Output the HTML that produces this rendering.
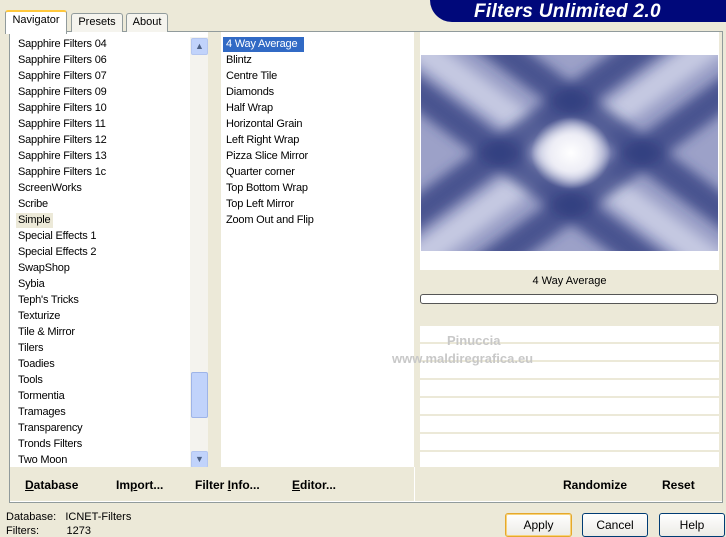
<!DOCTYPE html>
<html><head><style>
body{margin:0;width:726px;height:532px;background:#ece9d8;font-family:"Liberation Sans",sans-serif;font-size:11px;position:relative;overflow:hidden;color:#000}
.a{position:absolute}
.tab{position:absolute;top:13px;height:18px;border:1px solid #919b9c;border-bottom:none;background:#f5f4ee;text-align:center;line-height:17px;font-size:11px;border-radius:3px 3px 0 0}
.li{position:absolute;left:18px;font-size:11px;line-height:14px;white-space:nowrap;letter-spacing:-0.2px}
.mi{position:absolute;left:226px;font-size:11px;line-height:14px;white-space:nowrap;letter-spacing:-0.2px}
.btn{position:absolute;font-weight:bold;font-size:12px}
.pb{position:absolute;top:513px;height:22px;border:1px solid #003c74;border-radius:3px;background:linear-gradient(#fff,#ecebe6);text-align:center;line-height:22px;font-size:12px}
.hl{position:absolute;left:420px;width:299px;height:2px;background:#ece9d8}
</style></head><body>
<div class="a" style="left:430px;top:0;width:296px;height:22px;background:#00087a;border-bottom-left-radius:22px"></div>
<div class="a" style="left:474px;top:1px;color:#fff;font-weight:bold;font-style:italic;font-size:19px;letter-spacing:0.3px">Filters Unlimited 2.0</div>
<div class="a" style="left:9px;top:31px;width:712px;height:470px;border:1px solid #919b9c;background:#fff"></div>
<div class="tab" style="left:5px;top:10px;width:60px;height:22px;background:#fff;border-top:2px solid #ffc83c;z-index:2">Navigator</div>
<div class="tab" style="left:71px;width:50px">Presets</div>
<div class="tab" style="left:126px;width:40px">About</div>
<div class="a" style="left:190px;top:37px;width:18px;height:430px;background:#f4f3ee"></div>
<div class="a" style="left:191px;top:38px;width:15px;height:15px;background:#c1d3fb;border:1px solid #b4c6f0;border-radius:2px;color:#4d6185;font-size:9px;text-align:center;line-height:15px">&#9650;</div>
<div class="a" style="left:191px;top:372px;width:15px;height:44px;background:#c1d3fb;border:1px solid #9eb4e8;border-radius:2px"></div>
<div class="a" style="left:191px;top:451px;width:15px;height:15px;background:#c1d3fb;border:1px solid #b4c6f0;border-radius:2px;color:#4d6185;font-size:9px;text-align:center;line-height:15px">&#9660;</div>
<div class="a" style="left:208px;top:32px;width:13px;height:436px;background:#ece9d8"></div>
<div class="a" style="left:414px;top:32px;width:6px;height:436px;background:#ece9d8"></div>
<div class="a" style="left:719px;top:32px;width:3px;height:436px;background:#ece9d8"></div>
<div class="a" style="left:16px;top:213px;width:37px;height:15px;background:#ece9d8"></div>
<div class="li" style="top:37px">Sapphire Filters 04</div><div class="li" style="top:53px">Sapphire Filters 06</div><div class="li" style="top:69px">Sapphire Filters 07</div><div class="li" style="top:85px">Sapphire Filters 09</div><div class="li" style="top:101px">Sapphire Filters 10</div><div class="li" style="top:117px">Sapphire Filters 11</div><div class="li" style="top:133px">Sapphire Filters 12</div><div class="li" style="top:149px">Sapphire Filters 13</div><div class="li" style="top:165px">Sapphire Filters 1c</div><div class="li" style="top:181px">ScreenWorks</div><div class="li" style="top:197px">Scribe</div><div class="li" style="top:213px">Simple</div><div class="li" style="top:229px">Special Effects 1</div><div class="li" style="top:245px">Special Effects 2</div><div class="li" style="top:261px">SwapShop</div><div class="li" style="top:277px">Sybia</div><div class="li" style="top:293px">Teph's Tricks</div><div class="li" style="top:309px">Texturize</div><div class="li" style="top:325px">Tile &amp; Mirror</div><div class="li" style="top:341px">Tilers</div><div class="li" style="top:357px">Toadies</div><div class="li" style="top:373px">Tools</div><div class="li" style="top:389px">Tormentia</div><div class="li" style="top:405px">Tramages</div><div class="li" style="top:421px">Transparency</div><div class="li" style="top:437px">Tronds Filters</div><div class="li" style="top:453px">Two Moon</div>
<div class="a" style="left:223px;top:37px;width:81px;height:15px;background:#316ac5"></div>
<div class="mi" style="top:37px;color:#fff">4 Way Average</div><div class="mi" style="top:53px">Blintz</div><div class="mi" style="top:69px">Centre Tile</div><div class="mi" style="top:85px">Diamonds</div><div class="mi" style="top:101px">Half Wrap</div><div class="mi" style="top:117px">Horizontal Grain</div><div class="mi" style="top:133px">Left Right Wrap</div><div class="mi" style="top:149px">Pizza Slice Mirror</div><div class="mi" style="top:165px">Quarter corner</div><div class="mi" style="top:181px">Top Bottom Wrap</div><div class="mi" style="top:197px">Top Left Mirror</div><div class="mi" style="top:213px">Zoom Out and Flip</div>
<svg class="a" style="left:421px;top:55px" width="297" height="196">
<defs><filter id="b" x="-20%" y="-20%" width="140%" height="140%"><feGaussianBlur stdDeviation="6"/></filter>
<radialGradient id="c"><stop offset="0" stop-color="#fff"/><stop offset="0.5" stop-color="#eeeef6"/><stop offset="1" stop-color="#eeeef6" stop-opacity="0"/></radialGradient></defs>
<rect width="297" height="196" fill="#9ca1c8"/>
<g filter="url(#b)" stroke="#d0d3e8" stroke-width="26" stroke-opacity="0.8">
<line x1="-20" y1="-20" x2="320" y2="228"/><line x1="-20" y1="216" x2="320" y2="-32"/>
</g>
<g filter="url(#b)" stroke="#2f3a7c" stroke-width="30" stroke-opacity="0.75">
<line x1="-20" y1="26" x2="320" y2="274"/><line x1="-20" y1="-78" x2="320" y2="170"/>
<line x1="-20" y1="170" x2="320" y2="-78"/><line x1="-20" y1="274" x2="320" y2="26"/>
</g>
<ellipse cx="150" cy="98" rx="40" ry="36" fill="url(#c)"/>
</svg>
<div class="a" style="left:420px;top:270px;width:299px;height:56px;background:#ece9d8"></div>
<div class="a" style="left:420px;top:275px;width:299px;text-align:center">4 Way Average</div>
<div class="a" style="left:420px;top:294px;width:296px;height:8px;border:1px solid #555;border-radius:3px;background:#fff"></div>
<div class="hl" style="top:342px"></div><div class="hl" style="top:360px"></div><div class="hl" style="top:378px"></div><div class="hl" style="top:396px"></div><div class="hl" style="top:414px"></div><div class="hl" style="top:432px"></div><div class="hl" style="top:450px"></div>
<div class="a" style="left:447px;top:333px;color:#c8c8c8;font-weight:bold;font-size:13px">Pinuccia</div>
<div class="a" style="left:392px;top:351px;color:#c8c8c8;font-weight:bold;font-size:13px">www.maldiregrafica.eu</div>
<div class="a" style="left:10px;top:467px;width:712px;height:34px;background:#ece9d8"></div>
<div class="a" style="left:414px;top:467px;width:6px;height:34px;background:#ece9d8;border-left:1px solid #fff"></div>
<div class="btn" style="left:25px;top:478px"><u>D</u>atabase</div>
<div class="btn" style="left:116px;top:478px">Im<u>p</u>ort...</div>
<div class="btn" style="left:195px;top:478px">Filter <u>I</u>nfo...</div>
<div class="btn" style="left:292px;top:478px"><u>E</u>ditor...</div>
<div class="btn" style="left:563px;top:478px">Randomize</div>
<div class="btn" style="left:662px;top:478px">Reset</div>
<div class="a" style="left:6px;top:511px;font-size:11px">Database:&nbsp;&nbsp;&nbsp;ICNET-Filters</div>
<div class="a" style="left:6px;top:525px;font-size:11px">Filters:&nbsp;&nbsp;&nbsp;&nbsp;&nbsp;&nbsp;&nbsp;&nbsp;&nbsp;1273</div>
<div class="pb" style="left:505px;width:65px;border-color:#e5a82c;box-shadow:inset 0 0 0 1px #f8d37a">Apply</div>
<div class="pb" style="left:582px;width:64px">Cancel</div>
<div class="pb" style="left:659px;width:64px">Help</div>
</body></html>
